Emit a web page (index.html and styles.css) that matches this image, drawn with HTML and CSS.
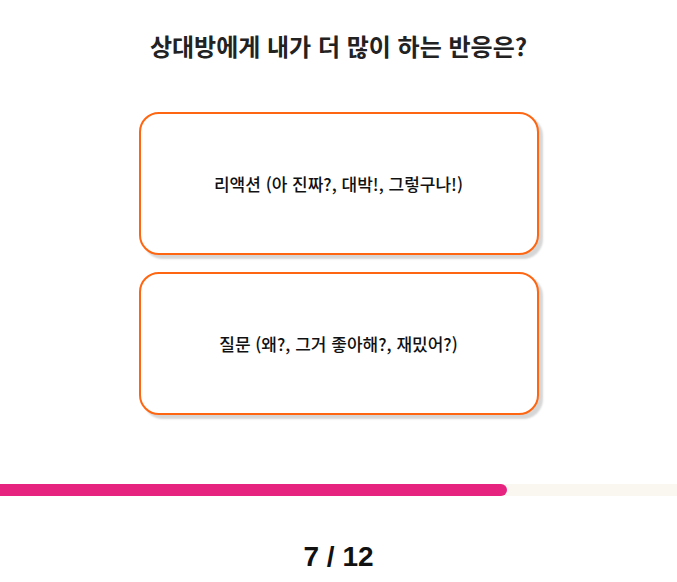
FILE: index.html
```html
<!DOCTYPE html>
<html lang="ko">
<head>
    <meta charset="UTF-8">
    <meta name="viewport" content="width=device-width, initial-scale=1.0">
    <title>Quiz</title>
    <link rel="stylesheet" href="styles.css">
</head>
<body>
    <div class="quiz">
        <h1 class="question">상대방에게 내가 더 많이 하는 반응은?</h1>
        <div class="choices">
            <button class="choice">리액션 (아 진짜?, 대박!, 그렇구나!)</button>
            <button class="choice">질문 (왜?, 그거 좋아해?, 재밌어?)</button>
        </div>
    </div>
    <div class="progress">
        <div class="progress-fill" style="width: 507px;"></div>
    </div>
    <div class="counter">7 / 12</div>
</body>
</html>
```

FILE: styles.css
```css
body {
    margin: 0;
    padding: 0;
    background: #fff;
    font-family: "Noto Sans CJK KR", "Noto Sans", sans-serif;
    color: #222;
}

.quiz {
    width: 400px;
    margin: 0 auto;
    padding-top: 32px;
}

.question {
    margin: 0;
    font-size: 24px;
    line-height: 28px;
    font-weight: bold;
    text-align: center;
    color: #222;
}

.choices {
    display: flex;
    flex-direction: column;
    gap: 17px;
    margin-top: 52px;
}

.choice {
    height: 143px;
    box-sizing: border-box;
    background: #fff;
    border: 2px solid #ff6611;
    border-radius: 20px;
    box-shadow: 4px 4px 2px rgba(0, 0, 0, 0.16);
    font-family: "Noto Sans CJK KR", "Noto Sans", sans-serif;
    font-size: 17px;
    font-weight: 500;
    color: #111;
    cursor: pointer;
}

.progress {
    margin-top: 69px;
    height: 12px;
    background: #faf6f0;
}

.progress-fill {
    height: 100%;
    background: #e6247f;
    border-radius: 0 6px 6px 0;
}

.counter {
    margin-top: 44px;
    text-align: center;
    font-family: "Liberation Sans", Arial, sans-serif;
    font-size: 28px;
    line-height: 34px;
    font-weight: bold;
    color: #111;
}
```
